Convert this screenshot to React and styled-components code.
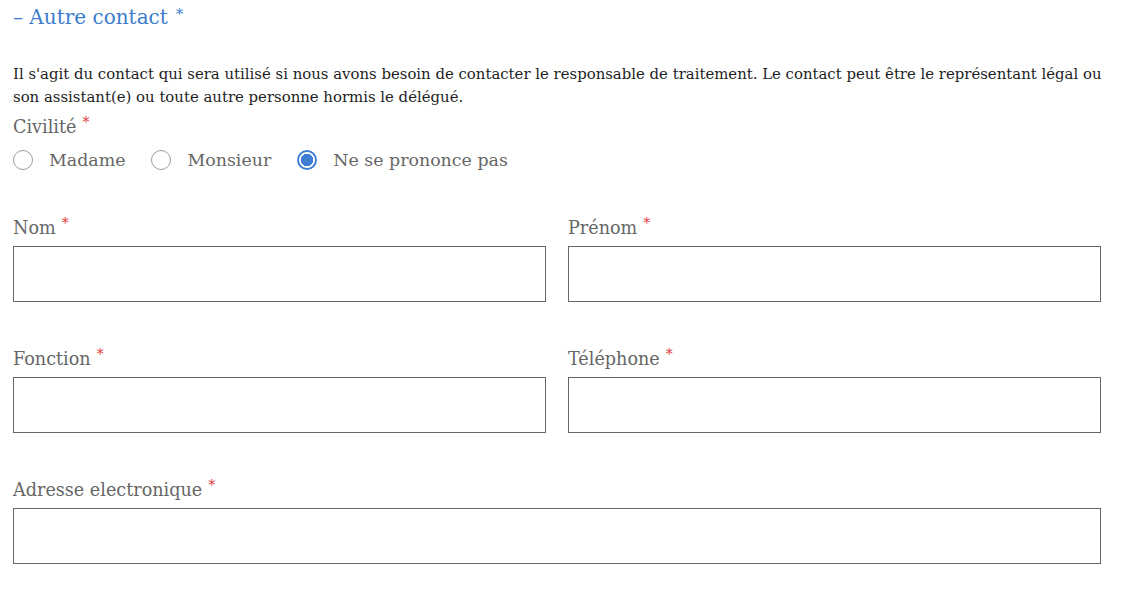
import React, { useState } from 'react'
import styled, { createGlobalStyle } from 'styled-components'

const GlobalStyle = createGlobalStyle`
  body {
    margin: 0;
    background: #ffffff;
    font-family: "DejaVu Serif", Georgia, serif;
  }
`

const Page = styled.section`
  width: 1088px;
  padding: 0 13px;
`

const Title = styled.h2`
  margin: 0;
  font-size: 20px;
  font-weight: normal;
  line-height: 34px;
  color: #3b7ccb;
  span {
    font-size: 15px;
    position: relative;
    top: -5px;
    margin-left: 8px;
  }
`

const Intro = styled.p`
  width: 1104px;
  margin: 27px 0 6px;
  font-size: 14.9px;
  line-height: 23px;
  color: #1e1e1e;
`

const Label = styled.label`
  display: block;
  font-size: 17.6px;
  line-height: ${p => p.$lh || '26px'};
  color: #666666;
  margin-bottom: ${p => p.$mb || '4px'};
`

const Star = styled.span`
  color: #e03a3a;
  font-size: 14px;
  margin-left: 6px;
  position: relative;
  top: -6px;
`

const RadioRow = styled.div`
  display: flex;
  align-items: center;
  height: 30px;
  gap: 26px;
`

const RadioOption = styled.label`
  display: flex;
  align-items: center;
  gap: 16px;
  cursor: pointer;
  font-size: 17.4px;
  color: #666666;
`

const RadioInput = styled.input.attrs({ type: 'radio' })`
  appearance: none;
  margin: 0;
  width: 20px;
  height: 20px;
  border-radius: 50%;
  border: 1px solid #9a9aa4;
  background: #fff;
  cursor: pointer;
  &:checked {
    border: 2px solid #3d7dd6;
    background: radial-gradient(circle, #3d7dd6 0 6px, #fff 6.5px);
  }
`

const Grid = styled.div`
  display: grid;
  grid-template-columns: 1fr 1fr;
  column-gap: 22px;
  row-gap: 44px;
  margin-top: 40px;
`

const Field = styled.div`
  grid-column: ${p => (p.$full ? '1 / -1' : 'auto')};
`

const TextInput = styled.input`
  display: block;
  box-sizing: border-box;
  width: 100%;
  height: 56px;
  border: 1px solid #666666;
  border-radius: 0;
  padding: 0 12px;
  font-size: 16px;
  font-family: inherit;
  outline: none;
`

const fields = [
  { id: 'nom', label: 'Nom' },
  { id: 'prenom', label: 'Prénom' },
  { id: 'fonction', label: 'Fonction' },
  { id: 'tel', label: 'Téléphone' },
  { id: 'email', label: 'Adresse electronique', full: true },
]

const civilites = ['Madame', 'Monsieur', 'Ne se prononce pas']

export default function App() {
  const [civ, setCiv] = useState('Ne se prononce pas')
  return (
    <Page>
      <GlobalStyle />
      <Title>
        – Autre contact<span>*</span>
      </Title>
      <Intro>
        Il s'agit du contact qui sera utilisé si nous avons besoin de contacter le responsable de traitement. Le
        contact peut être le représentant légal ou son assistant(e) ou toute autre personne hormis le délégué.
      </Intro>
      <Label $lh="24px" $mb="5px">
        Civilité<Star>*</Star>
      </Label>
      <RadioRow>
        {civilites.map(c => (
          <RadioOption key={c}>
            <RadioInput name="civ" checked={civ === c} onChange={() => setCiv(c)} />
            {c}
          </RadioOption>
        ))}
      </RadioRow>
      <Grid>
        {fields.map(f => (
          <Field key={f.id} $full={f.full}>
            <Label htmlFor={f.id}>
              {f.label}
              <Star>*</Star>
            </Label>
            <TextInput id={f.id} type="text" />
          </Field>
        ))}
      </Grid>
    </Page>
  )
}
